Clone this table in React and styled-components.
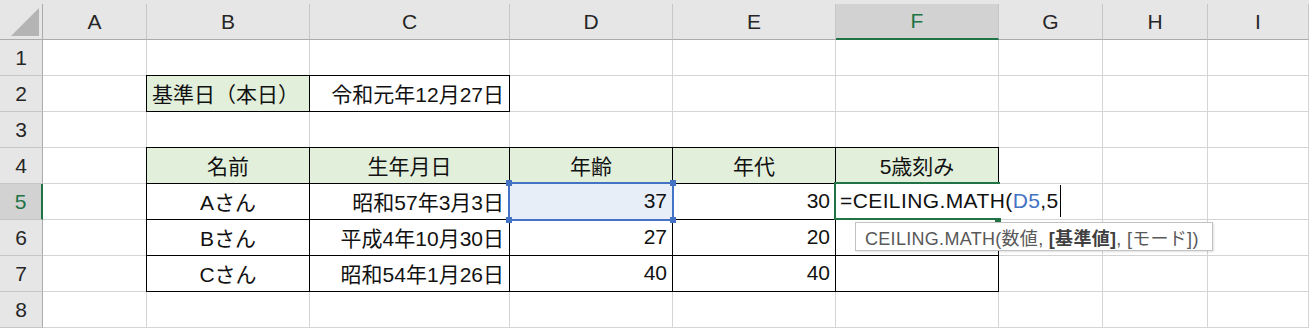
import React from "react";
import styled, { createGlobalStyle, css } from "styled-components";

const XL_GREEN = "#217346";
const HEAD_FILL = "#e2efda";
const SEL_FILL = "#e8eef8";
const REF_BLUE = "#4472c4";

const GlobalStyle = createGlobalStyle`
  * { box-sizing: border-box; }
  html, body {
    margin: 0;
    padding: 0;
    background: #fff;
    overflow: hidden;
  }
  body {
    font-family: "Liberation Sans", "Noto Sans CJK JP", sans-serif;
  }
`;

const Sheet = styled.div`
  display: grid;
  grid-template-columns: 43px 104px 163px 200px 163px 163px 163px 104px 105px 1fr;
  grid-auto-rows: 36px;
  width: 1309px;
  height: 328px;
  padding-top: 4px;
  background: #e6e6e6;
`;

const Corner = styled.div`
  border-right: 1px solid #ababab;
  border-bottom: 1px solid #ababab;
  svg {
    display: block;
  }
`;

const ColHead = styled.div`
  display: flex;
  align-items: center;
  justify-content: center;
  font-size: 21px;
  background: ${(p) => (p.$active ? "#d2d2d2" : "#e6e6e6")};
  color: ${(p) => (p.$active ? XL_GREEN : "#262626")};
  border-right: 1px solid #c6c6c6;
  border-bottom: ${(p) => (p.$active ? `2px solid ${XL_GREEN}` : "1px solid #ababab")};
`;

const RowHead = styled.div`
  display: flex;
  align-items: center;
  justify-content: center;
  font-size: 21px;
  background: ${(p) => (p.$active ? "#d2d2d2" : "#e6e6e6")};
  color: ${(p) => (p.$active ? XL_GREEN : "#262626")};
  border-right: ${(p) => (p.$active ? `2px solid ${XL_GREEN}` : "1px solid #ababab")};
  border-bottom: 1px solid #c6c6c6;
`;

const justify = { left: "flex-start", center: "center", right: "flex-end" };

const Cell = styled.div`
  display: flex;
  align-items: center;
  justify-content: ${(p) => justify[p.$align || "left"]};
  padding: 0 5px 1px;
  font-size: 21px;
  color: #111;
  white-space: nowrap;
  min-width: 0;
  background: ${(p) => p.$fill || "#fff"};
  border-right: 1px solid ${(p) => (p.$boxed ? "#000" : "#d4d4d4")};
  border-bottom: 1px solid ${(p) => (p.$boxed ? "#000" : "#d4d4d4")};
  ${(p) =>
    p.$boxed &&
    css`
      box-shadow: -1px -1px 0 #000, 0 -1px 0 #000, -1px 0 0 #000;
    `}
  ${(p) =>
    p.$ref &&
    css`
      position: relative;
    `}
  ${(p) =>
    p.$editing &&
    css`
      position: relative;
      z-index: 1;
      padding-left: 4px;
      border-right-color: #fff;
    `}
`;

/* coloured reference frame drawn over the cell named in the formula */
const RefBox = styled.div`
  position: absolute;
  left: -2px;
  top: -2px;
  width: 166px;
  height: 39px;
  border: 2px solid ${REF_BLUE};
  z-index: 2;

  &::before {
    content: "";
    position: absolute;
    left: -4px;
    top: -4px;
    width: 6px;
    height: 6px;
    background: ${REF_BLUE};
    box-shadow: 164px 0 0 ${REF_BLUE}, 0 37px 0 ${REF_BLUE}, 164px 37px 0 ${REF_BLUE};
  }
`;

/* active cell frame with its fill handle */
const ActiveFrame = styled.div`
  position: absolute;
  left: -2px;
  top: -2px;
  width: 166px;
  height: 38px;
  border: 2px solid ${XL_GREEN};
  border-right: none;

  &::after {
    content: "";
    position: absolute;
    left: 159px;
    top: 34px;
    width: 6px;
    height: 5px;
    background: ${XL_GREEN};
  }
`;

const EditText = styled.span`
  display: inline-flex;
  align-items: center;
  letter-spacing: 0.4px;
`;

const RefText = styled.span`
  color: ${REF_BLUE};
`;

const Caret = styled.span`
  display: inline-block;
  width: 1px;
  height: 32px;
  margin-left: 1px;
  background: #000;
`;

const Tooltip = styled.div`
  position: absolute;
  left: 19px;
  top: 38px;
  width: 358px;
  height: 29px;
  display: flex;
  align-items: center;
  padding-left: 9px;
  background: #fff;
  border: 1px solid #c2c2c2;
  box-shadow: 1px 1px 2px rgba(0, 0, 0, 0.12);
  font-size: 18px;
  letter-spacing: 0.3px;
  color: #595959;
  white-space: nowrap;
  z-index: 3;

  b {
    color: #3f3f3f;
    font-weight: bold;
  }
`;

const COLUMNS = ["A", "B", "C", "D", "E", "F", "G", "H", "I"];

const head = (text) => ({ text, fill: HEAD_FILL, align: "center", boxed: true });
const num = (text) => ({ text, align: "right", boxed: true });

const ROWS = [
  { n: 1, cells: {} },
  {
    n: 2,
    cells: {
      B: { text: "基準日（本日）", fill: HEAD_FILL, align: "left", boxed: true },
      C: { text: "令和元年12月27日", align: "right", boxed: true },
    },
  },
  { n: 3, cells: {} },
  {
    n: 4,
    cells: { B: head("名前"), C: head("生年月日"), D: head("年齢"), E: head("年代"), F: head("5歳刻み") },
  },
  {
    n: 5,
    active: true,
    cells: {
      B: { text: "Aさん", align: "center", boxed: true },
      C: num("昭和57年3月3日"),
      D: { ...num("37"), fill: SEL_FILL, ref: true },
      E: num("30"),
      F: { boxed: true, editing: true },
    },
  },
  {
    n: 6,
    cells: {
      B: { text: "Bさん", align: "center", boxed: true },
      C: num("平成4年10月30日"),
      D: num("27"),
      E: num("20"),
      F: { boxed: true },
    },
  },
  {
    n: 7,
    cells: {
      B: { text: "Cさん", align: "center", boxed: true },
      C: num("昭和54年1月26日"),
      D: num("40"),
      E: num("40"),
      F: { boxed: true },
    },
  },
  { n: 8, cells: {} },
];

const Editor = () => (
  <>
    <EditText>
      =CEILING.MATH(<RefText>D5</RefText>,5
      <Caret />
    </EditText>
    <ActiveFrame />
    <Tooltip>
      CEILING.MATH(数値,&nbsp;<b>[基準値]</b>, [モード])
    </Tooltip>
  </>
);

const SheetCell = ({ cell }) => {
  if (!cell) return <Cell />;
  return (
    <Cell
      $align={cell.align}
      $fill={cell.fill}
      $boxed={cell.boxed}
      $ref={cell.ref}
      $editing={cell.editing}
    >
      {cell.editing ? <Editor /> : cell.text}
      {cell.ref && <RefBox />}
    </Cell>
  );
};

export default function App() {
  return (
    <>
      <GlobalStyle />
      <Sheet>
        <Corner>
          <svg width="42" height="35" viewBox="0 0 42 35">
            <polygon points="11,32 39,32 39,4" fill="#b4b4b4" />
          </svg>
        </Corner>
        {COLUMNS.map((c) => (
          <ColHead key={c} $active={c === "F"}>
            {c}
          </ColHead>
        ))}
        {ROWS.map((row) => (
          <React.Fragment key={row.n}>
            <RowHead $active={row.active}>{row.n}</RowHead>
            {COLUMNS.map((c) => (
              <SheetCell key={c} cell={row.cells[c]} />
            ))}
          </React.Fragment>
        ))}
      </Sheet>
    </>
  );
}
